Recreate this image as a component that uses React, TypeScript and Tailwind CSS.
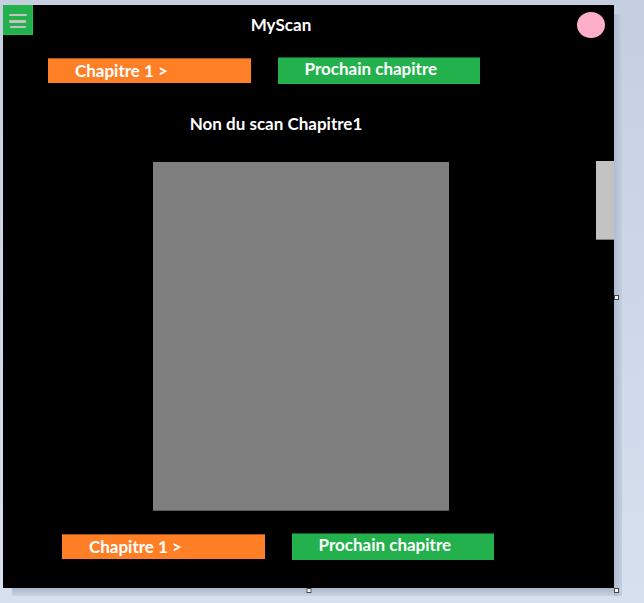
type ChapterNavProps = { className: string; label: string };

function ChapterNav({ className, label }: ChapterNavProps) {
  return (
    <nav aria-label={label} className={`grid grid-cols-2 items-center gap-[27px] ${className}`}>
      <button
        type="button"
        className="h-[25px] border-t border-[#a9541a] bg-[#ff7f27] pl-[27px] text-left leading-6"
      >
        Chapitre 1 &gt;
      </button>
      <button
        type="button"
        className="h-[27px] border-t border-[#14602c] bg-[#22b14c] pb-1 pl-[27px] text-left leading-[22px]"
      >
        Prochain chapitre
      </button>
    </nav>
  );
}

function Handle({ className }: { className: string }) {
  return <span className={`absolute size-[5px] border border-[#444] bg-white ${className}`} />;
}

export default function App() {
  return (
    <div className="flex min-h-screen bg-linear-to-b from-[#c6cfe0] to-[#d7e0ef] pt-[5px] pr-[30px] pb-[15px] pl-[3px]">
      <div className="relative flex flex-1 flex-col bg-black font-['Lato','Liberation_Sans',sans-serif] text-[17px] font-bold text-white">
        <div className="absolute top-[9px] -right-2 -bottom-2 w-2 bg-linear-to-r from-[#aebbd0] to-[#c3cfe1]" />
        <div className="absolute right-0 -bottom-2 left-[9px] h-2 bg-linear-to-b from-[#aab6ca] to-[#c9d4e5]" />

        <header className="flex items-start justify-between pr-[9px]">
          <button
            type="button"
            aria-label="Menu"
            className="size-[30px] border-r border-b border-[#1fc24c] bg-[#22b14c]"
          >
            <svg viewBox="0 0 29 29" className="size-[29px]" fill="#c3c3c3" aria-hidden="true">
              <rect x="6" y="9" width="18" height="2" rx="1" />
              <rect x="6" y="15" width="17" height="3" rx="1" />
              <rect x="7" y="21" width="16" height="2" rx="1" />
            </svg>
          </button>
          <h1 className="flex-1 pt-2 pr-12 text-center leading-6">MyScan</h1>
          <button
            type="button"
            aria-label="Profil"
            className="mt-[7px] h-[26px] w-7 rounded-[50%] bg-[#ffaec9]"
          />
        </header>

        <ChapterNav label="Navigation du haut" className="mt-[19px] pr-[134px] pl-[45px]" />

        <main className="mt-7 flex flex-1 flex-col">
          <h2 className="pr-[65px] text-center leading-6">Non du scan Chapitre1</h2>
          <div className="mt-[25px] flex flex-1 items-stretch gap-[147px] pl-[150px]">
            <div className="mt-px flex-1 border-b border-[#5a5a5a] bg-[#7f7f7f]" />
            <div className="h-[79px] w-[18px] border-b border-[#7f7f7f] bg-[#c3c3c3]" />
          </div>
        </main>

        <ChapterNav label="Navigation du bas" className="mt-[22px] mb-7 pr-[120px] pl-[59px]" />

        <Handle className="top-[290px] -right-[5px]" />
        <Handle className="-bottom-[5px] left-1/2 -translate-x-1/2" />
        <Handle className="-right-[5px] -bottom-[5px]" />
      </div>
    </div>
  );
}
